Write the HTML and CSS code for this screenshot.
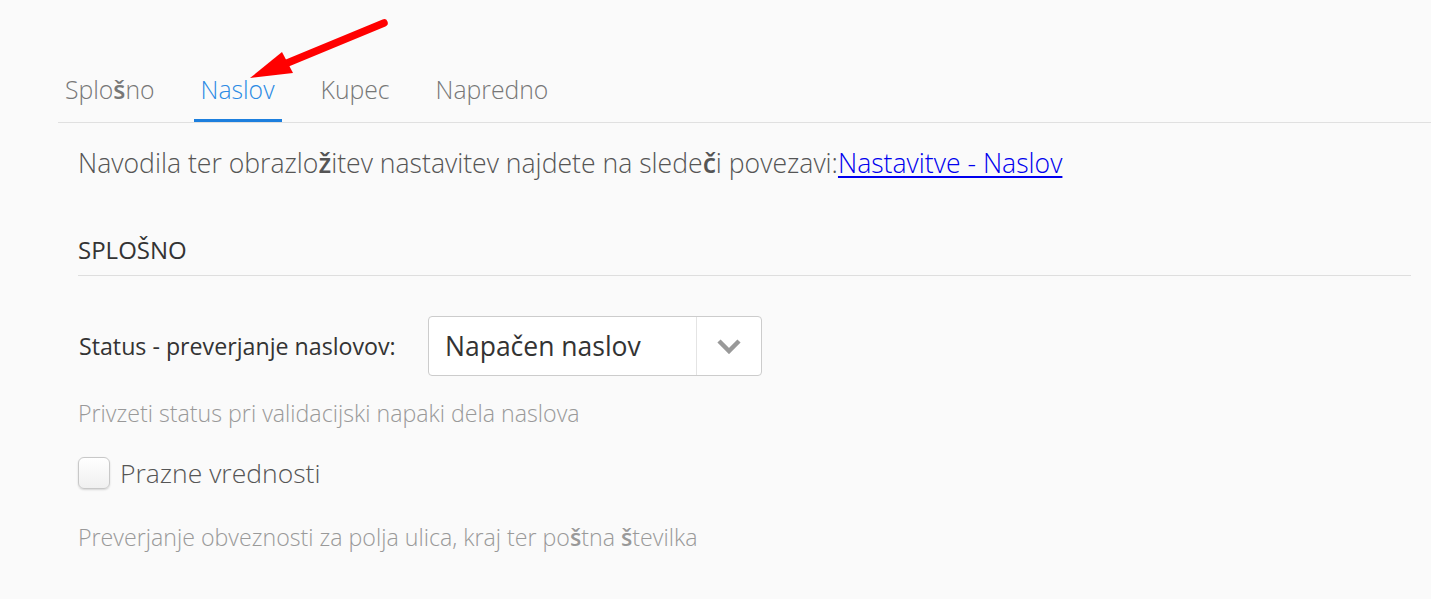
FILE: index.html
```html
<!DOCTYPE html>
<html lang="sl">
<head>
<meta charset="utf-8">
<title>Nastavitve - Naslov</title>
<link rel="stylesheet" href="styles.css">
</head>
<body>
<div class="page">
  <nav class="tabs">
    <a class="tab">Splo<span class="alt">š</span>no</a>
    <a class="tab active">Naslov</a>
    <a class="tab">Kupec</a>
    <a class="tab">Napredno</a>
  </nav>
  <div class="content">
    <p class="intro">Navodila ter obrazlo<span class="alt">ž</span>itev nastavitev najdete na slede<span class="alt">č</span>i povezavi:<a class="link" href="#">Nastavitve - Naslov</a></p>
    <h2 class="section-title">SPLOŠNO</h2>
    <div class="field">
      <label class="field-label">Status - preverjanje naslovov:</label>
      <div class="select">
        <span class="select-value">Napačen naslov</span>
        <span class="select-btn">
          <svg width="26" height="16" viewBox="0 0 26 16"><path d="M3 3l10 10 10-10" fill="none" stroke="#999" stroke-width="4.5" stroke-linecap="butt" stroke-linejoin="miter"/></svg>
        </span>
      </div>
    </div>
    <p class="help">Privzeti status pri validacijski napaki dela naslova</p>
    <div class="check-row">
      <span class="checkbox"></span>
      <span class="check-label">Prazne vrednosti</span>
    </div>
    <p class="help help-last">Preverjanje obveznosti za polja ulica, kraj ter po<span class="alt">š</span>tna <span class="alt">š</span>tevilka</p>
  </div>
  <svg class="arrow" width="1431" height="100" viewBox="0 0 1431 100">
    <line x1="384" y1="23" x2="280" y2="66" stroke="#ff0000" stroke-width="7.5" stroke-linecap="round"/>
    <polygon points="250,78 282,52 293,73" fill="#ff0000"/>
  </svg>
</div>
</body>
</html>
```

FILE: styles.css
```css
html, body {
  margin: 0;
  padding: 0;
  background: #fafafa;
}
body {
  font-family: "Open Sans", "Liberation Sans", sans-serif;
  font-weight: 300;
  color: #555;
}
.page {
  position: relative;
  padding-top: 70px;
}
.alt {
  font-weight: 600;
}
.tabs {
  display: flex;
  gap: 32px;
  margin-left: 58px;
  border-bottom: 1px solid #e0e0e0;
}
.tab {
  display: block;
  padding: 0 7px;
  font-size: 24.75px;
  line-height: 40px;
  height: 52px;
  color: #777;
  box-sizing: border-box;
  cursor: pointer;
}
.tab.active {
  color: #2b8ae4;
  border-bottom: 3px solid #1c7fde;
}
.content {
  padding: 0 20px 0 78px;
}
.intro {
  margin: 22px 0 0;
  font-size: 26.6px;
  line-height: 36px;
  color: #555;
}
.link {
  color: #0000ee;
  text-decoration: underline;
  text-underline-offset: 3px;
}
.section-title {
  margin: 53px 0 0;
  font-size: 24px;
  font-weight: 400;
  line-height: 32px;
  color: #333;
  padding-bottom: 9px;
  border-bottom: 1px solid #dedede;
}
.field {
  display: flex;
  align-items: center;
  margin-top: 40px;
}
.field-label {
  width: 350px;
  box-sizing: border-box;
  font-size: 23.2px;
  font-weight: 400;
  color: #333;
  padding-left: 1px;
}
.select {
  display: flex;
  width: 334px;
  height: 60px;
  box-sizing: border-box;
  border: 1px solid #ccc;
  border-radius: 4px;
  background: #fff;
}
.select-value {
  flex: 1;
  padding-left: 16px;
  font-size: 26.5px;
  font-weight: 400;
  line-height: 58px;
  color: #333;
}
.select-btn {
  width: 64px;
  border-left: 1px solid #e4e4e4;
  display: flex;
  align-items: center;
  justify-content: center;
}
.help {
  margin: 22px 0 0;
  font-size: 23.2px;
  line-height: 30px;
  color: #999;
}
.check-row {
  display: flex;
  align-items: center;
  gap: 10px;
  margin-top: 28px;
}
.checkbox {
  width: 30px;
  height: 30px;
  border: 1px solid #c8c8c8;
  border-radius: 6px;
  background: linear-gradient(#ffffff, #f0f0f0);
  box-shadow: 0 1px 2px rgba(0,0,0,0.15);
}
.check-label {
  font-size: 26.5px;
  line-height: 34px;
  color: #555;
}
.help-last {
  margin-top: 32px;
}
.arrow {
  position: absolute;
  left: 0;
  top: 0;
  pointer-events: none;
}
```
